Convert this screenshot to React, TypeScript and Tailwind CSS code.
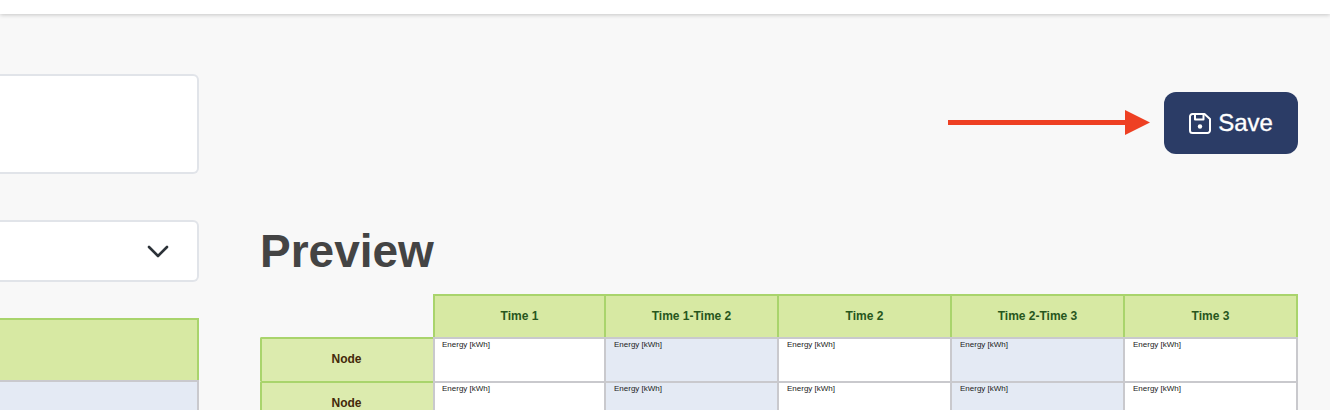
const columns = ['Time 1', 'Time 1-Time 2', 'Time 2', 'Time 2-Time 3', 'Time 3']

function EnergyCell({ index }: { index: number }) {
  return (
    <div
      className={`h-[44px] border-t-2 border-r-2 border-[#c9c9cd] pt-[1px] text-[8px] leading-[10px] text-[#222] ${
        index % 2 === 1 ? 'bg-[#e4eaf4]' : 'bg-white'
      } ${index === 0 ? 'border-l-2 pl-[7px]' : 'pl-[8px]'}`}
    >
      Energy [kWh]
    </div>
  )
}

function NodeRow() {
  return (
    <>
      <div className="flex h-[44px] items-center justify-center rounded-tl-[2px] border-t-2 border-l-2 border-[#a9d46c] bg-[#dcebae] pr-[2px] pb-[3px] text-[12px] font-bold text-[#43290a]">
        Node
      </div>
      {columns.map((c, i) => (
        <EnergyCell key={c} index={i} />
      ))}
    </>
  )
}

export default function App() {
  return (
    <div className="h-[410px] overflow-hidden bg-[#f8f8f8] font-['Liberation_Sans',sans-serif]">
      <div className="h-[14px] bg-white shadow-[0_1px_4px_rgba(0,0,0,0.2)]" />

      <div className="flex gap-[61px] pr-[32px]">
        <div className="w-[199px] shrink-0 pt-[60px]">
          <div className="h-[100px] rounded-r-md border-2 border-l-0 border-[#e1e4e9] bg-white" />
          <div className="mt-[46px] flex h-[62px] items-center justify-end rounded-r-md border-2 border-l-0 border-[#e1e4e9] bg-white pr-[28px]">
            <svg width="22" height="13" viewBox="0 0 22 13" fill="none" stroke="#2c3238" strokeWidth="2.6" strokeLinecap="round" strokeLinejoin="round">
              <path d="M2 2l9 9 9-9" />
            </svg>
          </div>
          <div className="mt-[36px] h-[62px] border-2 border-l-0 border-b-0 border-[#a9d46c] bg-[#d7e9a3]" />
          <div className="h-[40px] border-t-2 border-r-2 border-[#c9c9cd] bg-[#e4eaf4]" />
        </div>

        <div className="min-w-0 flex-1 pt-[78px]">
          <div className="flex items-center justify-end gap-[14px]">
            <svg className="mb-[2px]" width="202" height="25" viewBox="0 0 202 25" fill="#ee4023">
              <rect x="0" y="10" width="178" height="5" />
              <path d="M177 0l25 12.500-25 12.500z" />
            </svg>
            <button className="flex h-[62px] w-[134px] items-center justify-center gap-[7px] rounded-[12px] bg-[#2b3c66] text-[24px] text-white [-webkit-text-stroke:0.35px_white]">
              <svg width="22" height="21" viewBox="0 0 22 21" fill="none" stroke="currentColor" strokeWidth="2" strokeLinejoin="round">
                <path d="M3.500 1H15.500L21 6V17.500a2.500 2.500 0 0 1-2.500 2.500H3.500A2.500 2.500 0 0 1 1 17.500V3.500A2.500 2.500 0 0 1 3.500 1Z" />
                <path d="M6 1V6.500H14.500V1" />
                <circle cx="11" cy="13.500" r="2.200" fill="currentColor" stroke="none" />
              </svg>
              Save
            </button>
          </div>

          <h1 className="mt-[69px] text-[46px] leading-[56px] font-bold text-[#444444]">Preview</h1>

          <div className="mt-[15px] grid grid-cols-[173px_173px_173px_173px_173px_173px]">
            <div className="h-[43px]" />
            {columns.map((c, i) => (
              <div
                key={c}
                className={`flex h-[43px] items-center justify-center border-t-2 border-r-2 border-[#a9d46c] bg-[#d7e9a3] pb-[1px] text-[12px] font-bold text-[#27561d] ${
                  i === 0 ? 'border-l-2' : ''
                }`}
              >
                {c}
              </div>
            ))}
            <NodeRow />
            <NodeRow />
          </div>
        </div>
      </div>
    </div>
  )
}
